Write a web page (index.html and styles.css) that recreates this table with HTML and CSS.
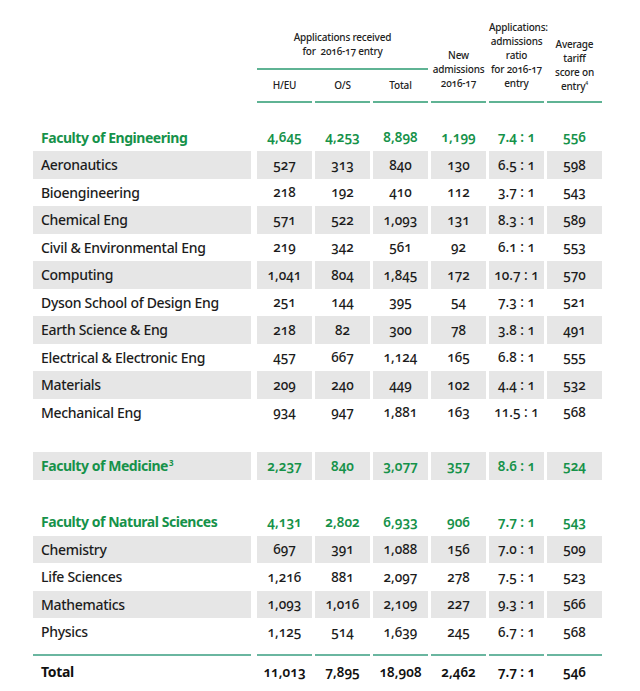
FILE: index.html
```html
<!DOCTYPE html>
<html lang="en">
<head>
<meta charset="utf-8">
<title>Applications and admissions 2016-17</title>
<link rel="stylesheet" href="styles.css">
</head>
<body>
<div class="sheet">
  <div class="head">
    <div class="h-group">Applications received<br>for&nbsp; 2016-17 entry</div>
    <div class="h-new">New<br>admissions<br>2016-17</div>
    <div class="h-ratio">Applications:<br>admissions<br>ratio<br>for 2016-17<br>entry</div>
    <div class="h-avg">Average<br>tariff<br>score on<br>entry<sup>4</sup></div>
    <div class="h-sub c2">H/EU</div>
    <div class="h-sub c3">O/S</div>
    <div class="h-sub c4">Total</div>
  </div>

  <section class="block first">
    <div class="row fac"><span class="lab">Faculty of Engineering</span><span>4,645</span><span>4,253</span><span>8,898</span><span>1,199</span><span>7.4 : 1</span><span>556</span></div>
    <div class="row alt"><span class="lab">Aeronautics</span><span>527</span><span>313</span><span>840</span><span>130</span><span>6.5 : 1</span><span>598</span></div>
    <div class="row"><span class="lab">Bioengineering</span><span>218</span><span>192</span><span>410</span><span>112</span><span>3.7 : 1</span><span>543</span></div>
    <div class="row alt"><span class="lab">Chemical Eng</span><span>571</span><span>522</span><span>1,093</span><span>131</span><span>8.3 : 1</span><span>589</span></div>
    <div class="row"><span class="lab">Civil &amp; Environmental Eng</span><span>219</span><span>342</span><span>561</span><span>92</span><span>6.1 : 1</span><span>553</span></div>
    <div class="row alt"><span class="lab">Computing</span><span>1,041</span><span>804</span><span>1,845</span><span>172</span><span>10.7 : 1</span><span>570</span></div>
    <div class="row"><span class="lab">Dyson School of Design Eng</span><span>251</span><span>144</span><span>395</span><span>54</span><span>7.3 : 1</span><span>521</span></div>
    <div class="row alt"><span class="lab">Earth Science &amp; Eng</span><span>218</span><span>82</span><span>300</span><span>78</span><span>3.8 : 1</span><span>491</span></div>
    <div class="row"><span class="lab">Electrical &amp; Electronic Eng</span><span>457</span><span>667</span><span>1,124</span><span>165</span><span>6.8 : 1</span><span>555</span></div>
    <div class="row alt"><span class="lab">Materials</span><span>209</span><span>240</span><span>449</span><span>102</span><span>4.4 : 1</span><span>532</span></div>
    <div class="row"><span class="lab">Mechanical Eng</span><span>934</span><span>947</span><span>1,881</span><span>163</span><span>11.5 : 1</span><span>568</span></div>
  </section>

  <section class="block med">
    <div class="row fac alt"><span class="lab">Faculty of Medicine<sup>3</sup></span><span>2,237</span><span>840</span><span>3,077</span><span>357</span><span>8.6 : 1</span><span>524</span></div>
  </section>

  <section class="block nat">
    <div class="row fac"><span class="lab">Faculty of Natural Sciences</span><span>4,131</span><span>2,802</span><span>6,933</span><span>906</span><span>7.7 : 1</span><span>543</span></div>
    <div class="row alt"><span class="lab">Chemistry</span><span>697</span><span>391</span><span>1,088</span><span>156</span><span>7.0 : 1</span><span>509</span></div>
    <div class="row"><span class="lab">Life Sciences</span><span>1,216</span><span>881</span><span>2,097</span><span>278</span><span>7.5 : 1</span><span>523</span></div>
    <div class="row alt"><span class="lab">Mathematics</span><span>1,093</span><span>1,016</span><span>2,109</span><span>227</span><span>9.3 : 1</span><span>566</span></div>
    <div class="row"><span class="lab">Physics</span><span>1,125</span><span>514</span><span>1,639</span><span>245</span><span>6.7 : 1</span><span>568</span></div>
  </section>

  <div class="row total"><span class="lab">Total</span><span>11,013</span><span>7,895</span><span>18,908</span><span>2,462</span><span>7.7 : 1</span><span>546</span></div>
</div>
</body>
</html>
```

FILE: styles.css
```css
html, body {
  margin: 0;
  padding: 0;
  background: #ffffff;
}

.sheet {
  padding: 20px 0 0 33px;
  font-family: "Noto Sans", "Open Sans", sans-serif;
  color: #1c1c1c;
  font-variant-numeric: oldstyle-nums;
}

.head,
.row {
  display: grid;
  grid-template-columns: 221px repeat(6, 55px);
  column-gap: 3px;
}

.head {
  font-size: 10px;
  line-height: 14px;
  font-weight: 500;
  text-align: center;
  letter-spacing: -0.2px;
  color: #222222;
}

.h-group {
  grid-column: 2 / 5;
  grid-row: 1;
  padding: 10px 0 10px;
  border-bottom: 2px solid #5fb394;
}

.h-new,
.h-ratio,
.h-avg {
  grid-row: 1 / 3;
  align-self: end;
  padding-bottom: 11px;
  border-bottom: 2px solid #5fb394;
}

.h-new { grid-column: 5; }
.h-ratio { grid-column: 6; }
.h-avg { grid-column: 7; padding-bottom: 8px; }

.h-sub {
  grid-row: 2;
  padding: 8px 0 9px;
  border-bottom: 2px solid #5fb394;
}
.c2 { grid-column: 2; }
.c3 { grid-column: 3; }
.c4 { grid-column: 4; }

.head sup {
  font-size: 5px;
  vertical-align: 5px;
  line-height: 0;
  font-variant-numeric: lining-nums;
}

.block.first { margin-top: 20.5px; }
.block.med { margin-top: 26px; }
.block.nat { margin-top: 28.5px; }

.row {
  height: 27.5px;
  align-items: stretch;
  font-size: 13.5px;
  font-weight: 500;
}

.row > span {
  display: flex;
  align-items: center;
  justify-content: center;
}

.row > .lab {
  justify-content: flex-start;
  margin-right: 3px;
  padding-left: 8px;
  font-size: 14px;
  letter-spacing: -0.3px;
}

.row.alt > span {
  background: #e6e6e6;
}

.row.fac {
  color: #16924a;
  font-weight: 600;
}

.row.fac > .lab {
  font-weight: 700;
  letter-spacing: -0.45px;
}

.row sup {
  align-self: flex-start;
  font-size: 8px;
  line-height: 1;
  margin: 7px 0 0 1px;
  font-variant-numeric: lining-nums;
}

.row.total {
  margin-top: 8px;
  height: 34px;
  font-weight: 600;
  color: #111111;
}

.row.total > span {
  border-top: 2px solid #6ab6a0;
}

.row.total > .lab {
  font-weight: 700;
}
```
